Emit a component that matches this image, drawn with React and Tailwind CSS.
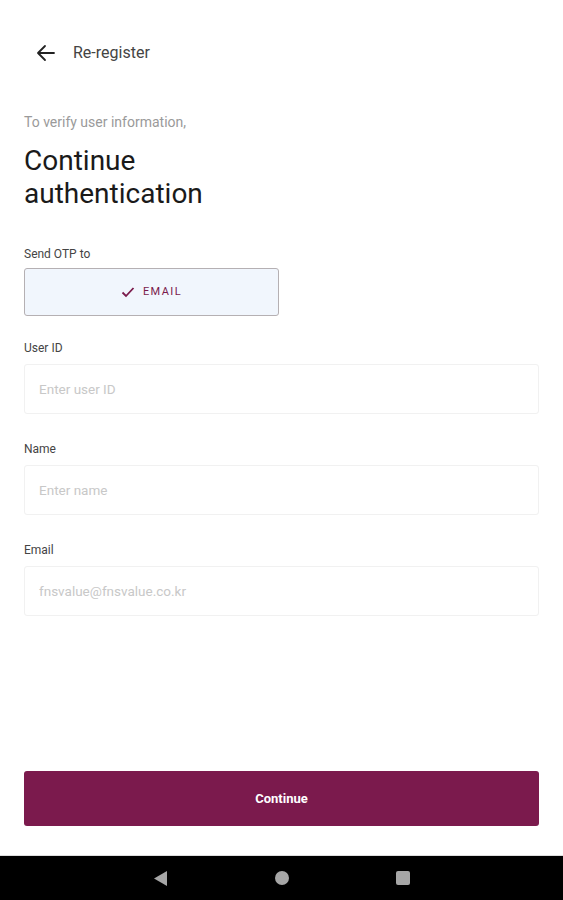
export default function App() {
  const font = { fontFamily: "Roboto, 'Noto Sans', sans-serif" };
  return (
    <div className="w-[563px] h-[900px] bg-white flex flex-col" style={font}>
      <div className="flex-1 flex flex-col px-6">
        <div className="flex items-center h-[24px] mt-[41px]">
          <svg width="24" height="24" viewBox="0 0 24 24" className="ml-[10px]">
            <path d="M20 12H5M11 5l-7 7 7 7" fill="none" stroke="#222" strokeWidth="1.8" strokeLinecap="round" strokeLinejoin="round" />
          </svg>
          <span className="ml-[15px] text-[16px] text-[#444]">Re-register</span>
        </div>
        <div className="mt-[48px] text-[14px] text-[#9a9a9a] leading-[18px]">To verify user information,</div>
        <div className="mt-[13px] text-[28px] leading-[33px] text-[#1a1a1a]">Continue<br />authentication</div>
        <div className="mt-[37px] text-[12px] text-[#444] leading-[15px]">Send OTP to</div>
        <div className="mt-[6px] w-[255px] h-[48px] border border-[#b5b0b3] rounded-[3px] bg-[#f1f6fd] flex items-center justify-center gap-[8px]">
          <svg width="14" height="14" viewBox="0 0 14 14">
            <path d="M1.5 7.5l3.5 3.5L12.5 3" fill="none" stroke="#7a1a4b" strokeWidth="1.8" />
          </svg>
          <span className="text-[11px] tracking-[1.4px] text-[#7a1a4b]">EMAIL</span>
        </div>
        {[
          ["User ID", "Enter user ID"],
          ["Name", "Enter name"],
          ["Email", "fnsvalue@fnsvalue.co.kr"],
        ].map(([label, ph], i) => (
          <div key={label} className={i === 0 ? "mt-[25px]" : "mt-[28px]"}>
            <div className="text-[12px] text-[#444] leading-[15px]">{label}</div>
            <div className="mt-[8px] h-[50px] border border-[#f1f1f1] rounded-[3px] flex items-center px-[14px]">
              <span className="text-[13.5px] text-[#c8c8c8]">{ph}</span>
            </div>
          </div>
        ))}
        <div className="flex-1" />
        <div className="mb-[29px] h-[55px] bg-[#7b1a4d] rounded-[3px] flex items-center justify-center">
          <span className="text-white text-[13px] font-bold">Continue</span>
        </div>
      </div>
      <div className="h-[45px] bg-black border-t border-[#ddd] flex items-center justify-center">
        <div className="flex items-center gap-[107px]">
          <svg width="14" height="15" viewBox="0 0 14 15"><path d="M13 0v15L0 7.5z" fill="#a6a6a6" /></svg>
          <div className="w-[14px] h-[14px] rounded-full bg-[#a6a6a6]" />
          <div className="w-[14px] h-[14px] rounded-[2px] bg-[#a6a6a6]" />
        </div>
      </div>
    </div>
  );
}
